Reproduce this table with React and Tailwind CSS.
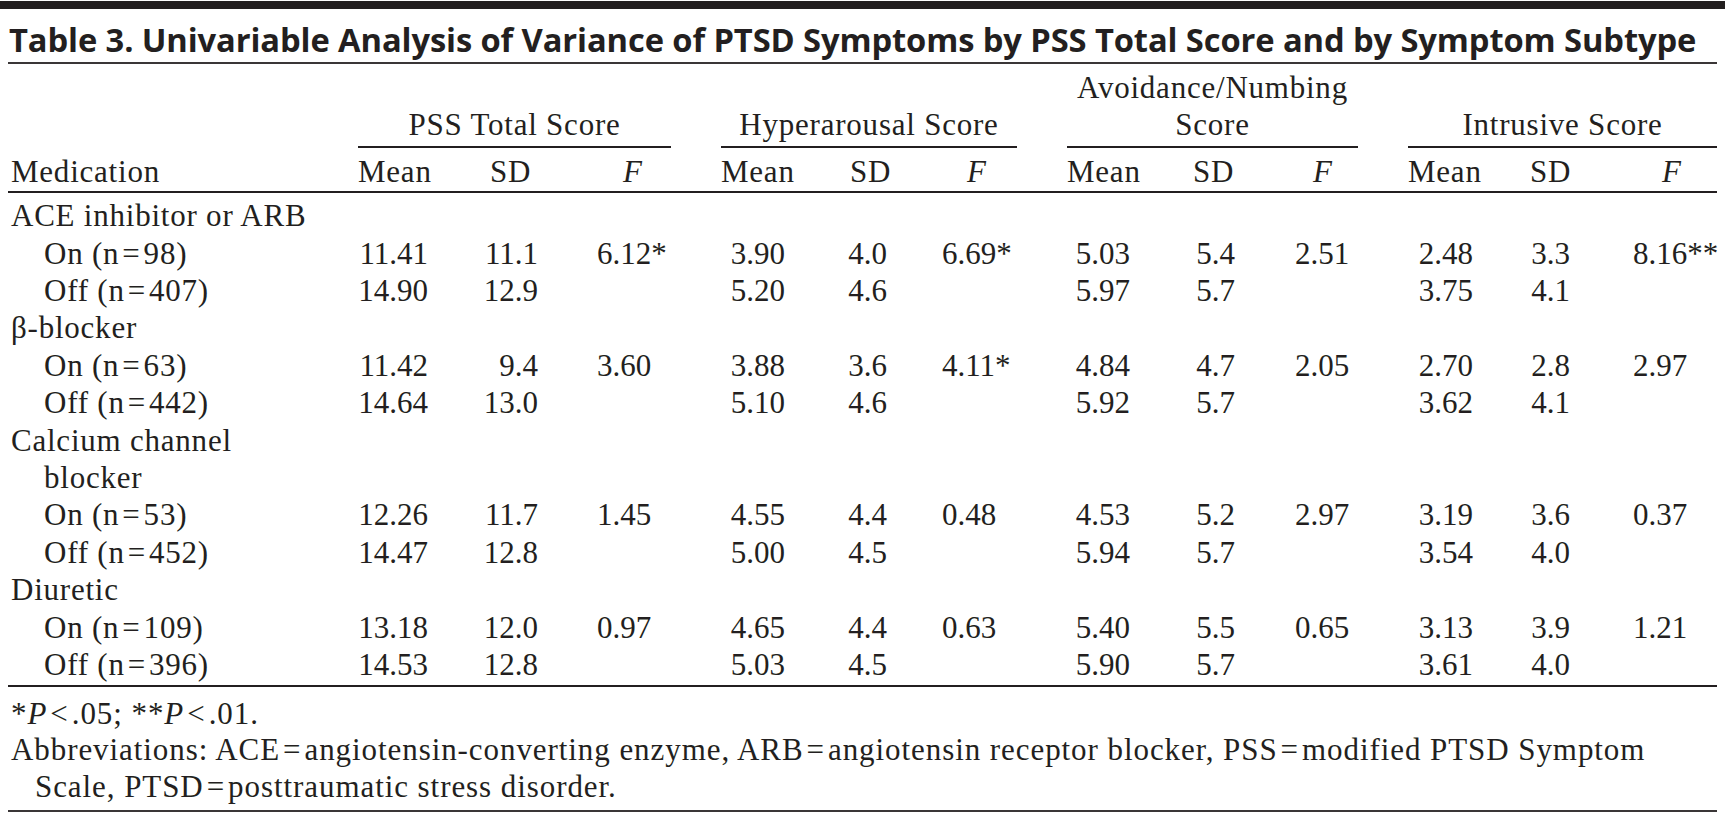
import React from "react";

const GRID =
  "grid grid-cols-[350px_82px_120px_111px_50px_84px_115px_97px_50px_83px_110px_98px_50px_82px_110px_117px]";

// one entry per data column: header padding, value alignment
const cols = [
  { head: "pl-[0px]", val: "text-right pr-[12px]" },
  { head: "pl-[50px]", val: "text-right pr-[22px]" },
  { head: "pl-[63px]", val: "pl-[37px]" },
  { head: "pl-[0px]", val: "text-right pr-[20px]" },
  { head: "pl-[45px]", val: "text-right pr-[33px]" },
  { head: "pl-[47px]", val: "pl-[22px]" },
  { head: "pl-0", val: "text-right pr-[20px]" },
  { head: "pl-[43px]", val: "text-right pr-[25px]" },
  { head: "pl-[53px]", val: "pl-[35px]" },
  { head: "pl-[0px]", val: "text-right pr-[17px]" },
  { head: "pl-[40px]", val: "text-right pr-[30px]" },
  { head: "pl-[62px]", val: "pl-[33px]" },
];

const groups = [
  ["PSS Total Score"],
  ["Hyperarousal Score"],
  ["Avoidance/Numbing", "Score"],
  ["Intrusive Score"],
];

// tight "=" / "<" as set in the printed table
const Op = ({ children }) => <span className="px-[3px]">{children}</span>;
const N = ({ pre, v }) => (
  <>
    {pre} (n<Op>=</Op>
    {v})
  </>
);

const rows = [
  { label: "ACE inhibitor or ARB" },
  {
    label: <N pre="On" v="98" />,
    sub: true,
    v: ["11.41", "11.1", "6.12*", "3.90", "4.0", "6.69*", "5.03", "5.4", "2.51", "2.48", "3.3", "8.16**"],
  },
  {
    label: <N pre="Off" v="407" />,
    sub: true,
    v: ["14.90", "12.9", "", "5.20", "4.6", "", "5.97", "5.7", "", "3.75", "4.1", ""],
  },
  { label: "β-blocker" },
  {
    label: <N pre="On" v="63" />,
    sub: true,
    v: ["11.42", "9.4", "3.60", "3.88", "3.6", "4.11*", "4.84", "4.7", "2.05", "2.70", "2.8", "2.97"],
  },
  {
    label: <N pre="Off" v="442" />,
    sub: true,
    v: ["14.64", "13.0", "", "5.10", "4.6", "", "5.92", "5.7", "", "3.62", "4.1", ""],
  },
  { label: "Calcium channel" },
  { label: "blocker", sub: true },
  {
    label: <N pre="On" v="53" />,
    sub: true,
    v: ["12.26", "11.7", "1.45", "4.55", "4.4", "0.48", "4.53", "5.2", "2.97", "3.19", "3.6", "0.37"],
  },
  {
    label: <N pre="Off" v="452" />,
    sub: true,
    v: ["14.47", "12.8", "", "5.00", "4.5", "", "5.94", "5.7", "", "3.54", "4.0", ""],
  },
  { label: "Diuretic" },
  {
    label: <N pre="On" v="109" />,
    sub: true,
    v: ["13.18", "12.0", "0.97", "4.65", "4.4", "0.63", "5.40", "5.5", "0.65", "3.13", "3.9", "1.21"],
  },
  {
    label: <N pre="Off" v="396" />,
    sub: true,
    v: ["14.53", "12.8", "", "5.03", "4.5", "", "5.90", "5.7", "", "3.61", "4.0", ""],
  },
];

function cellsWithGaps(render) {
  // 12 data cells plus an empty spacer after each group of 3 (except the last)
  const out = [];
  cols.forEach((c, i) => {
    out.push(render(c, i));
    if (i % 3 === 2 && i < 11) out.push(<div key={`gap-${i}`} />);
  });
  return out;
}

export default function App() {
  return (
    <div className="min-h-screen w-full bg-white text-[#231f20]">
      <div className="pt-[1px]">
        <div className="h-[8px] w-full bg-[#231f20]" />
      </div>

      <div className="pl-[8px] pr-[8px]">
        <div className="border-b-2 border-[#3a3637] pt-[11px] pb-[2px]">
          <h1 className="font-['Open_Sans',sans-serif] text-[32.7px] font-bold leading-[40px] tracking-[-0.1px] pl-[1px] whitespace-nowrap">
            Table 3. Univariable Analysis of Variance of PTSD Symptoms by PSS Total Score and by Symptom Subtype
          </h1>
        </div>

        <div className="font-['Liberation_Serif','Times_New_Roman',serif] text-[31px]">
          {/* group headers */}
          <div className={`${GRID} pt-[4.5px]`}>
            <div />
            {groups.map((g, i) => (
              <React.Fragment key={g[0]}>
                <div className="col-span-3 flex flex-col items-center justify-end border-b-2 border-[#231f20] pb-[3.5px] leading-[37px] tracking-[0.025em] whitespace-nowrap">
                  {g.map((line) => (
                    <span key={line}>{line}</span>
                  ))}
                </div>
                {i < 3 && <div />}
              </React.Fragment>
            ))}
          </div>

          {/* sub headers */}
          <div className={`${GRID} border-b-2 border-[#231f20] pt-[5px] pb-[1px] leading-[37px] tracking-[0.025em]`}>
            <div className="pl-[3px]">Medication</div>
            {cellsWithGaps((c, i) => (
              <div key={i} className={c.head}>
                {i % 3 === 2 ? <span className="italic">F</span> : i % 3 === 0 ? "Mean" : "SD"}
              </div>
            ))}
          </div>

          {/* body */}
          <div className="border-b-2 border-[#231f20] pt-[4.3px] pb-[1.5px]">
            {rows.map((r, ri) => (
              <div key={ri} className={`${GRID} h-[37.4px] leading-[37.4px]`}>
                <div className={`tracking-[0.025em] whitespace-nowrap ${r.sub ? "pl-[36px]" : "pl-[3px]"}`}>
                  {r.label}
                </div>
                {r.v &&
                  cellsWithGaps((c, i) => (
                    <div key={i} className={`whitespace-nowrap ${c.val}`}>
                      {r.v[i]}
                    </div>
                  ))}
              </div>
            ))}
          </div>

          {/* footnotes */}
          <div className="border-b-2 border-[#3a3637] pt-[8.75px] pb-[4.75px] pl-[3px] leading-[36.5px] tracking-[0.03em] whitespace-nowrap">
            <div>
              *<span className="italic">P</span>
              <Op>&lt;</Op>.05; **<span className="italic">P</span>
              <Op>&lt;</Op>.01.
            </div>
            <div>
              Abbreviations: ACE<Op>=</Op>angiotensin-converting enzyme, ARB<Op>=</Op>angiotensin receptor blocker,
              PSS<Op>=</Op>modified PTSD Symptom
            </div>
            <div className="pl-[24px]">
              Scale, PTSD<Op>=</Op>posttraumatic stress disorder.
            </div>
          </div>
        </div>
      </div>
    </div>
  );
}
